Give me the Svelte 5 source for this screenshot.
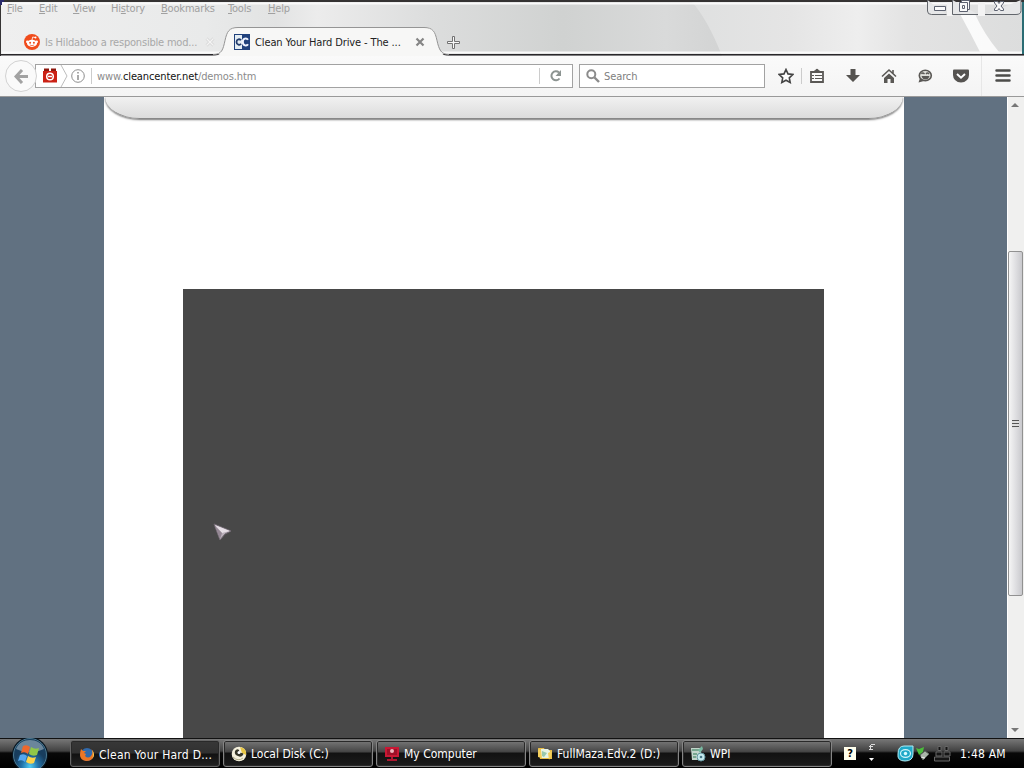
<script>
    let url = { sub: 'www.', host: 'cleancenter.net', path: '/demos.htm' };
    let search = '';

    // before / accelerator key / after
    const menus = [
        { key: 'F', after: 'ile', width: 32 },
        { key: 'E', after: 'dit', width: 34 },
        { key: 'V', after: 'iew', width: 38 },
        { before: 'Hi', key: 's', after: 'tory', width: 50 },
        { key: 'B', after: 'ookmarks', width: 67 },
        { key: 'T', after: 'ools', width: 40 },
        { key: 'H', after: 'elp', width: 30 },
    ];

    const tasks = [
        { icon: 'firefox', title: 'Clean Your Hard D...', active: true },
        { icon: 'disk', title: 'Local Disk (C:)' },
        { icon: 'computer', title: 'My Computer' },
        { icon: 'folder', title: 'FullMaza.Edv.2 (D:)' },
        { icon: 'wpi', title: 'WPI' },
    ];
</script>

<main>
    <header>
        <div class="titlebar">
            <svg class="frame" width="1024" height="56" viewBox="0 0 1024 56">
                <defs>
                    <linearGradient id="glass">
                        <stop offset="0" stop-color="#efefef" />
                        <stop offset=".2" stop-color="#e9eaea" />
                        <stop offset=".27" stop-color="#e2e3e3" />
                        <stop offset=".31" stop-color="#ececec" />
                        <stop offset=".42" stop-color="#dcdddd" />
                        <stop offset=".55" stop-color="#d0d2d1" />
                        <stop offset=".65" stop-color="#d9dada" />
                        <stop offset=".7" stop-color="#d3d4d4" />
                    </linearGradient>
                    <linearGradient id="shine">
                        <stop offset="0" stop-color="#dfe0e0" />
                        <stop offset=".3" stop-color="#e5e5e5" />
                        <stop offset=".5" stop-color="#eeeeee" />
                        <stop offset=".65" stop-color="#e3e3e3" />
                        <stop offset="1" stop-color="#dcdddd" />
                    </linearGradient>
                </defs>
                <rect width="1024" height="56" fill="url(#glass)" />
                <path d="M692 2h332v54H722Q708 20 692 2z" fill="url(#shine)" />
                <path d="M960 14h15q9 20 24 38h-19q-9-18-20-38z" fill="#fff" opacity=".85" />
                <path d="M0 0h1024v2H0z" fill="#353333" />
                <path d="M2 3.500h1020M2 52.500h1020" stroke="#fafafa" stroke-width="2" />
                <path d="M0 0h1v56H0z" fill="#353333" />
                <path d="M0 0h4v2H2v3H0z" fill="#29296a" />
                <path d="M1022 2h2v53h-2z" fill="#2a6c74" />
                <path d="M0 54h1024v1.600H0z" fill="#29272a" />
                <path d="M212 56c10 0 11-6 13-15 2-10 4-14 13-14h186c10 0 11 4 13 14 2 9 4 15 12 15z" fill="#f7f7f6" />
                <path d="M213 54.500c9 0 10-5 12-14 2-9 4-13 13-13h186c9 0 11 4 13 13 2 9 4 14 12 14" fill="none" stroke="#959595" />
            </svg>
            <nav>
                {#each menus as menu}
                    <span style="width: {menu.width}px">{menu.before ?? ''}<u>{menu.key}</u>{menu.after}</span>
                {/each}
            </nav>
            <div class="tabs">
                <div class="tab first">
                    <svg width="16" height="16" viewBox="0 0 16 16">
                        <circle cx="8" cy="8" r="8" fill="#f04b1b" />
                        <ellipse cx="8" cy="9.300" rx="5" ry="3.600" fill="#fff" />
                        <circle cx="3.300" cy="7.800" r="1.300" fill="#fff" /><circle cx="12.700" cy="7.800" r="1.300" fill="#fff" />
                        <path d="M8 6l.7-3 2.600.6" fill="none" stroke="#fff" stroke-width=".8" />
                        <circle cx="11.500" cy="3.500" r="1" fill="#fff" />
                        <circle cx="6.100" cy="8.700" r="1" fill="#f04b1b" /><circle cx="9.900" cy="8.700" r="1" fill="#f04b1b" />
                        <path d="M5.800 11q2.200 1.300 4.400 0" fill="none" stroke="#f04b1b" stroke-width=".7" />
                    </svg>
                    <span class="title">Is Hildaboo a responsible mod...</span>
                    <svg class="close" width="10" height="10" viewBox="0 0 10 10"><path d="M1.500 1.500l7 7m0-7l-7 7" stroke="#cfcfcf" stroke-width="2.500" /><path d="M1.500 1.500l7 7m0-7l-7 7" stroke="#f4f4f4" stroke-width="1.500" /></svg>
                </div>
                <div class="tab selected">
                    <svg width="16" height="16" viewBox="0 0 16 16">
                        <path d="M0 0h16v16H0z" fill="#20417c" /><path d="M1 1h7v14H1z" fill="#e4edf3" />
                        <path d="M7 6.300C6 4.500 2.500 5 2.500 8S6 11.500 7 9.800" fill="none" stroke="#223c6d" stroke-width="1.800" />
                        <path d="M14 5.700C12.500 3.500 8.800 4.200 8.800 8s4 4.500 5.200 2.300" fill="none" stroke="#f0f4ff" stroke-width="2" />
                    </svg>
                    <span class="title">Clean Your Hard Drive - The ...</span>
                    <svg class="close" width="10" height="10" viewBox="0 0 10 10"><path d="M1.500 1.500l7 7m0-7l-7 7" stroke="#858585" stroke-width="2.200" /></svg>
                </div>
                <svg class="plus" width="13" height="13" viewBox="0 0 13 13"><path d="M5.500.5h2v5h5v2h-5v5h-2v-5h-5v-2h5z" fill="#f8f8f8" stroke="#727272" /></svg>
            </div>
            <svg class="controls" width="98" height="16" viewBox="0 0 98 16">
                <path d="M21 0h6v16h-6zM52 0h7v16h-7z" fill="#f3f3f3" />
                <g fill="#e6e7e8" stroke="#62666c">
                    <path d="M1.500 0v11q0 3.500 4 3.500h15" /><path d="M52 14.500H26.500V0" /><path d="M59 14.500h31q5 0 5-4V0" />
                </g>
                <path d="M21 0h5v2h-5zM52 0h7v2h-7z" fill="#353333" />
                <g fill="#fafafa" stroke="#5d6270">
                    <path d="M8.500 6.500h11v4h-11z" />
                    <path d="M35.500.5h8v9h-8z" /><path d="M33.500 2.500h8v9h-8z" /><path d="M36.500 5.500h2v3h-2z" />
                    <path d="M68.500 1.500h3l1.500 2 1.500-2h3v1.500l-2.500 3 2.500 3v1.500h-3l-1.500-2-1.500 2h-3V9L71 6l-2.500-3z" />
                </g>
            </svg>
        </div>

        <div class="toolbar">
            <div class="back">
                <svg width="15" height="15" viewBox="0 0 15 15"><path d="M8 1L2 7.500 8 14M2.500 7.500H14" fill="none" stroke="#a2a2a2" stroke-width="3" /></svg>
            </div>
            <div class="urlbar">
                <svg width="32" height="22" viewBox="0 0 32 22">
                    <path d="M8 3.500h5v3H8zM15 3.500h5v3h-5z" fill="#8d160c" /><path d="M7 6h14v11.500H7z" fill="#cb2115" />
                    <circle cx="14" cy="11.500" r="3.300" fill="none" stroke="#fff" stroke-width="1.500" /><path d="M12 11.500h4" stroke="#fff" stroke-width="1.500" />
                    <path d="M25 0l6 11-6 11" fill="none" stroke="#bcbcbc" />
                </svg>
                <svg class="info" width="14" height="14" viewBox="0 0 14 14"><circle cx="7" cy="7" r="6.300" fill="#fff" stroke="#8e8e8e" /><path d="M7 6v5M7 3v1.500" stroke="#858585" stroke-width="1.400" /></svg>
                <i></i>
                <span class="url">{url.sub}<b>{url.host}</b>{url.path}</span>
                <i class="reload-line"></i>
                <svg class="reload" width="14" height="14" viewBox="0 0 14 14"><path d="M10.500 9.500A4.500 4.500 0 1 1 10 3.500" fill="none" stroke="#8c9491" stroke-width="2" /><path d="M12 1v6H6.500z" fill="#8c9491" /></svg>
            </div>
            <div class="search">
                <svg width="14" height="14" viewBox="0 0 14 14"><circle cx="5.300" cy="5.300" r="4" fill="none" stroke="#8b8b8b" stroke-width="2" /><path d="M8.500 8.500l4.500 4.500" stroke="#8b8b8b" stroke-width="2.400" /></svg>
                <input placeholder="Search" bind:value={search} />
            </div>
            <div class="buttons">
                <svg width="16" height="16" viewBox="0 0 16 16"><path d="M8 1.500l2 4.400 4.800.6-3.500 3.300.9 4.700L8 12.200l-4.200 2.300.9-4.700L1.200 6.500 6 5.900z" fill="#fff" stroke="#444" stroke-width="1.600" /></svg>
                <i></i>
                <svg width="16" height="16" viewBox="0 0 16 16"><path d="M2 4h12v10H2z" fill="#fafafa" stroke="#5a5855" stroke-width="1.800" /><path d="M5 3.500L8 1l3 2.500z" fill="#5a5855" stroke="#5a5855" /><path d="M3 7.500h2m1 0h7M3 10.500h2m1 0h7" stroke="#5a5855" stroke-width="1.200" /></svg>
                <svg width="16" height="16" viewBox="0 0 16 16"><path d="M5.500 1h5v6H15l-7 7-7-7h4.500z" fill="#555350" /></svg>
                <svg width="16" height="16" viewBox="0 0 16 16"><path d="M1 8.500L8 2l7 6.500M12 2v4" fill="none" stroke="#5a5855" stroke-width="1.600" /><path d="M8 5.500l5 4.500v5H9.500v-4h-3v4H3v-5z" fill="#5a5855" /></svg>
                <svg width="16" height="16" viewBox="0 0 16 16"><path d="M3 10l-1.500 4.500L7 13z" fill="#5a5855" /><ellipse cx="8.300" cy="7.500" rx="6" ry="5.200" fill="#deded9" stroke="#5a5855" stroke-width="1.600" /><path d="M4.500 6q1.200-2 3 0m1.500 0q1.500-2 3 0" fill="none" stroke="#5a5855" stroke-width="1.300" /><path d="M4.500 8h8q-1 3.500-4 3.500t-4-3.500z" fill="#5a5855" /></svg>
                <svg width="16" height="16" viewBox="0 0 16 16"><path d="M1 1.500h14q1 0 1 1V7q0 3-2 5-2.500 2.500-6 2.500T2 12Q0 10 0 7V2.500q0-1 1-1z" fill="#555350" /><path d="M4 6l4 3.700L12 6" fill="none" stroke="#fff" stroke-width="2" /></svg>
                <i class="menu-line"></i>
                <svg width="16" height="16" viewBox="0 0 16 16"><path d="M1.500 2.500h13M1.500 7.500h13M1.500 12.500h13" stroke="#4c4c4a" stroke-width="2.500" stroke-linecap="round" /></svg>
            </div>
        </div>
    </header>

    <section>
        <div class="page">
            <div class="banner"></div>
            <div class="player"></div>
        </div>
        <div class="scrollbar">
            <b class="up"></b>
            <div class="thumb"><span></span></div>
            <b class="down"></b>
        </div>
    </section>

    <footer>
        <div class="start">
            <svg width="38" height="30" viewBox="0 0 38 30">
                <defs>
                    <radialGradient id="orb" cy=".85"><stop offset="0" stop-color="#51cdf3" /><stop offset=".5" stop-color="#2373aa" /><stop offset="1" stop-color="#183d5d" /></radialGradient>
                </defs>
                <circle cx="19" cy="17" r="18" fill="#071420" /><circle cx="19" cy="17" r="16.500" fill="url(#orb)" stroke="#4b7990" />
                <path d="M5 11C9-1 29-1 33 11q-14 7-28 0z" fill="#d1e1e6" opacity=".45" />
                <path d="M12 8q4-2 7 1l-2 7q-3-3-7-1z" fill="#ed682d" /><path d="M20 9q4 3 8 1l-2 7q-4 2-8-1z" fill="#91c747" />
                <path d="M9 17q4-2 7 1l-2 6q-3-3-7-1z" fill="#55a7ee" /><path d="M17 18q4 3 8 1l-2 6q-4 2-8-1z" fill="#fed34a" />
            </svg>
        </div>
        <div class="tasks">
            {#each tasks as task}
                <button class:active={task.active}>
                    <svg width="16" height="16" viewBox="0 0 16 16">
                        {#if task.icon === 'firefox'}
                            <circle cx="8" cy="7.500" r="6.500" fill="#326aab" />
                            <path d="M2 2l2 2 3 0-2 2 2 1-1 2q3 3 6 0 3-4 0-7 4 3 2.500 7.500t-7.500 4.500Q1 13 1 8q0-3 1-6z" fill="#ed7626" /><path d="M13 3q4 5 0 9 2-4 0-9z" fill="#ffd34b" />
                        {:else if task.icon === 'disk'}
                            <circle cx="8" cy="8" r="7.300" fill="#f4f0dc" /><path d="M9 1q7 1 6 8l-4-2z" fill="#e7c645" /><path d="M4 5q2-3 4-1 0 3 3 3 2 0 1 2-2 3-5 1-4-1-3-5z" fill="#353528" /><circle cx="8" cy="6.500" r="1.500" fill="#fff" /><path d="M2 11q5 5 10 1" fill="none" stroke="#b0ac86" />
                        {:else if task.icon === 'computer'}
                            <path d="M1 1h14v10H1z" fill="#ca1734" /><path d="M3 3h10v6H3z" fill="#9d1027" /><circle cx="8" cy="5" r="2" fill="#efb5bd" /><path d="M7 11h2v2h4v2H3v-2h4z" fill="#ac1830" />
                        {:else if task.icon === 'folder'}
                            <path d="M1 2h6l1 2h7v9H3z" fill="#e8bd48" /><path d="M4 3h7l2 2v7H4z" fill="#e8f4e4" /><path d="M5 5l5 2-3 4-2-1z" fill="#99c9ae" /><path d="M1 3l3 1 1 8-4-1zM11 7l4-2-1 5-2 4z" fill="#f4cf5c" />
                        {:else}
                            <path d="M1 2h10v12H2z" fill="#c3d6cc" /><path d="M2 4h8M3 8h4M3 11h3" stroke="#5f977b" stroke-width="1.500" /><path d="M8 4l4-4 1 3-3 4z" fill="#79b9a2" /><circle cx="11" cy="11" r="4" fill="#c6e9ed" stroke="#6697a0" /><circle cx="11" cy="11" r="1.300" fill="#487787" />
                        {/if}
                    </svg>
                    <span>{task.title}</span>
                </button>
            {/each}
        </div>
        <div class="tray">
            <span class="help">?</span>
            <svg class="lang" width="8" height="18" viewBox="0 0 8 18"><path d="M3 .5h4M2.500 1v4M1 2.500h4M1 5.500h4" stroke="#ddd" fill="none" /><path d="M1 14h5l-2.500 3z" fill="#fff" /></svg>
            <svg width="54" height="18" viewBox="0 0 54 18">
                <path d="M7 1h9v8q0 7-8 7T1 9q0-8 6-8z" fill="#20a9c8" stroke="#afedf6" /><ellipse cx="8.500" cy="8.500" rx="5" ry="3.800" fill="none" stroke="#d2f5fa" stroke-width="1.200" /><circle cx="8.500" cy="8.500" r="1.700" fill="#d9fcff" />
                <path d="M19 3l3 1 5-2-1 5-4 3z" fill="#4bbd3c" /><path d="M23 10l5-4 4 3-6 6z" fill="#a9b5a9" stroke="#5c665e" /><path d="M24 12l4 1" stroke="#eee" />
                <g fill="#151515" stroke="#666"><path d="M41 1.500h3v4h-3zM48 1.500h3v4h-3zM39 7h6v4h-6zM47 7h6v4h-6zM37.500 12h15v4h-15z" /></g>
            </svg>
            <time>1:48 AM</time>
        </div>
    </footer>

    <svg class="cursor" width="19" height="19" viewBox="0 0 19 19"><path d="M1 1l17 7-6 3-5 6z" fill="#b9afb9" stroke="#706871" /><path d="M2 2l15 6-8 2z" fill="#e6dfe6" /><path d="M2 3l7 7-2 6z" fill="#948794" /></svg>
</main>

<style>
    :global(body) { margin: 0; overflow: hidden; }

    main {
        position: relative;
        display: flex;
        flex-direction: column;
        width: 1024px;
        height: 768px;
        font: 11px "DejaVu Sans Condensed", "DejaVu Sans", Tahoma, sans-serif;
        font-stretch: condensed;
        color: #222;
    }

    svg { display: block; flex: none; }

    header { height: 97px; flex: none; }

    .titlebar { position: relative; height: 56px; }
    .frame { position: absolute; top: 0; left: 0; }

    nav {
        position: relative;
        display: flex;
        padding-left: 7px;
        height: 27px;
        line-height: 18px;
        color: #a0a0a0;
        letter-spacing: -0.18px;
    }
    nav span { flex: none; }

    .tabs {
        position: relative;
        display: flex;
        height: 29px;
        align-items: center;
        padding-left: 24px;
    }
    .tab { display: flex; align-items: center; width: 192px; }
    .title { margin-left: 5px; padding-top: 1px; white-space: nowrap; }
    .first { color: #a8a8a8; margin-right: 18px; }
    .first .title { width: 160px; letter-spacing: -0.2px; }
    .selected .title { width: 160px; color: #222; letter-spacing: -0.12px; }
    .plus { margin: 1px 0 0 21px; }
    .controls { position: absolute; right: 0; top: 0; }

    .toolbar {
        display: flex;
        height: 41px;
        box-sizing: border-box;
        align-items: center;
        background: linear-gradient(#fafafa, #f4f4f4);
        border-bottom: 1px solid #999;
        padding-left: 5px;
    }
    .back {
        position: relative;
        z-index: 1;
        display: grid;
        place-items: center;
        width: 30px;
        height: 30px;
        border: 1px solid #d2d2d2;
        border-radius: 50%;
        background: #fafafa;
    }
    .urlbar, .search {
        display: flex;
        align-items: center;
        box-sizing: border-box;
        height: 24px;
        border: 1px solid #a2a2a2;
        background: #fff;
    }
    .urlbar { width: 538px; margin-left: -2px; }
    .urlbar i, .buttons i { width: 1px; height: 16px; background: #ccc; }
    .info { margin: 0 6px 0 3px; }
    .url { flex: 1; margin-left: 5px; padding-top: 1px; color: #8b8b8b; letter-spacing: -0.12px; }
    .url b { color: #111; font-weight: 400; }
    .reload { margin: 0 9px; }
    .search { width: 186px; margin-left: 6px; padding-left: 6px; }
    .search input {
        width: 140px;
        padding: 1px 0 0;
        margin-left: 4px;
        border: 0;
        outline: 0;
        font: inherit;
        letter-spacing: -0.1px;
    }
    .search input::placeholder { color: #808080; opacity: 1; }
    .buttons { display: flex; flex: 1; align-items: center; gap: 20px; padding-left: 13px; }
    .buttons i { margin: 0 -13px 0 -13px; }
    .buttons .menu-line { height: 40px; margin: 0 -7px 0 -8px; background: #e7e7e7; }

    section {
        display: flex;
        height: 641px;
        background: #617181;
    }
    .page {
        width: 800px;
        margin-left: 104px;
        background: #fff;
        overflow: hidden;
    }
    .banner {
        height: 21px;
        margin: 0 1px;
        border-bottom: 1px solid #888;
        border-radius: 0 0 38px 38px / 0 0 24px 24px;
        background: linear-gradient(#f1f1f1, #dcdcdc);
        box-shadow: 0 1px 2px #777;
    }
    .player {
        width: 641px;
        height: 449px;
        margin: 170px 0 0 79px;
        background: #484848;
    }
    .scrollbar {
        display: flex;
        flex-direction: column;
        width: 17px;
        margin-left: auto;
        box-sizing: border-box;
        border-left: 1px solid #fff;
        background: #f0f0ef;
    }
    .up, .down { width: 0; border: 4px solid transparent; margin-left: 3px; }
    .up { border-top: 0; border-bottom-color: #777; margin-top: 6px; }
    .down { border-bottom: 0; border-top-color: #777; margin-top: auto; margin-bottom: 6px; }
    .thumb {
        display: grid;
        place-items: center;
        box-sizing: border-box;
        width: 15px;
        height: 345px;
        margin-top: 144px;
        border: 1px solid #919191;
        border-radius: 2px;
        background: linear-gradient(90deg, #f5f5f5, #dddde0 55%, #c9c9cd);
    }
    .thumb span { width: 7px; height: 8px; background: repeating-linear-gradient(#555 0 1px, #ddd 1px 3px); }

    footer {
        display: flex;
        height: 30px;
        box-sizing: border-box;
        border-top: 1px solid #111;
        background: linear-gradient(#777, #414141 12px, #080808 14px, #000);
        color: #fff;
    }
    .start { width: 59px; padding-left: 11px; margin-top: -1px; height: 30px; }
    .tasks { display: flex; gap: 3px; padding-top: 1px; }
    button {
        display: flex;
        align-items: center;
        gap: 4px;
        box-sizing: border-box;
        width: 150px;
        height: 27px;
        padding: 0 0 0 7px;
        border: 1px solid #858585;
        border-radius: 3px;
        background: linear-gradient(#777, #444 11px, #111 12px, #1c1c1c);
        box-shadow: inset 0 0 0 1px #292929;
        color: #fff;
        font: 12px "DejaVu Sans Condensed", "DejaVu Sans", Tahoma, sans-serif;
        font-stretch: condensed;
        letter-spacing: 0;
        white-space: nowrap;
    }
    button.active {
        background: linear-gradient(#383838, #303030 12px, #111 13px, #222);
        padding: 2px 0 0 8px;
        border-color: #666;
        letter-spacing: 0.25px;
    }
    .tray { display: flex; align-items: center; flex: 1; }
    .help {
        width: 12px;
        height: 13px;
        margin-left: 12px;
        background: #ffffed;
        color: #000;
        font-weight: 700;
        line-height: 13px;
        text-align: center;
    }
    .lang { margin: -2px 21px 0 12px; }
    time { margin-left: 9px; font-size: 12px; letter-spacing: 0.2px; white-space: nowrap; }

    .cursor { position: absolute; left: 213px; top: 523px; }
</style>
